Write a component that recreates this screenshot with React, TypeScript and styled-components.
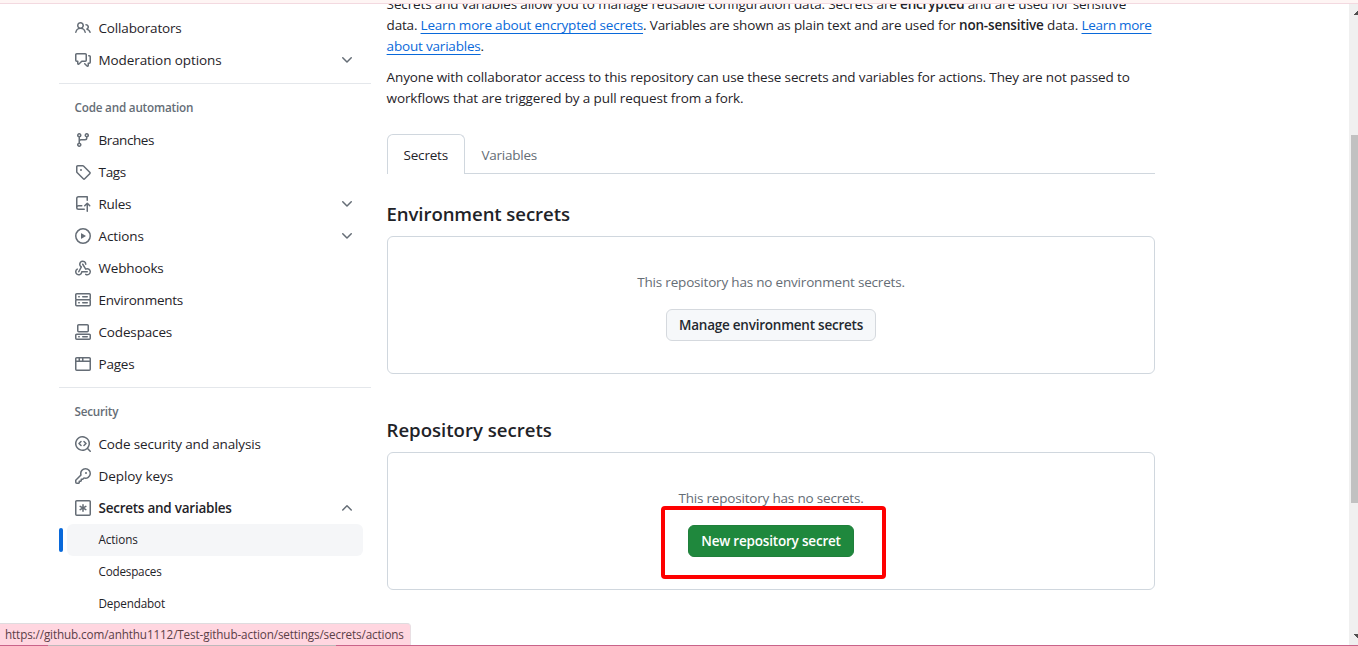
import React from 'react';
import styled, { createGlobalStyle, css } from 'styled-components';

const GlobalStyle = createGlobalStyle`
  *, *::before, *::after { box-sizing: border-box; }
  body {
    margin: 0;
    background: #fff;
    color: #1f2328;
    font-family: 'Open Sans', 'Noto Sans', sans-serif;
    font-size: 13.5px;
    line-height: 21px;
  }
  p, h2, h3, ul { margin: 0; padding: 0; }
`;

const Screen = styled.div`
  position: relative;
  display: flex;
  flex-direction: column;
  width: 1358px;
  height: 646px;
  overflow: hidden;
`;

const TopStrip = styled.div`
  flex: none;
  height: 4px;
  background: #fef5f4;
  border-bottom: 1px solid #f3d9e0;
`;

const Body = styled.div`
  display: flex;
  height: 641px;
  overflow: hidden;
`;

const BottomEdge = styled.div`
  flex: none;
  height: 1px;
  background: linear-gradient(to right, #c9638a 48px, #bdb9bb 48px 336px, #c9638a 336px);
`;

const Tracked = styled.span<{ $track?: number }>`
  letter-spacing: ${(p) => p.$track ?? -0.15}px;
  white-space: pre;
`;

/* Sidebar */

const Sidebar = styled.nav`
  flex: none;
  width: 312px;
  margin-left: 59px;
  padding-top: 8px;
`;

const NavGroup = styled.ul`
  list-style: none;
`;

const NavItem = styled.li`
  display: flex;
  align-items: center;
  height: 32px;
  padding: 0 16px;
`;

const NavLabel = styled(Tracked)<{ $strong?: boolean }>`
  flex: 1;
  margin-left: 7.5px;
  font-weight: ${(p) => (p.$strong ? 600 : 400)};
`;

const Divider = styled.hr`
  height: 1px;
  margin: 7px 0 8px;
  border: 0;
  background: #e4e7eb;
`;

const GroupTitle = styled.h3<{ $track: number }>`
  height: 32px;
  padding-left: 15.5px;
  font-size: 11.7px;
  font-weight: 600;
  line-height: 30px;
  letter-spacing: ${(p) => p.$track}px;
  color: #656d76;
`;

const SubItem = styled.li<{ $current?: boolean }>`
  position: relative;
  height: 32px;
  margin: 0 8px;
  padding-left: 31.5px;
  border-radius: 6px;
  font-size: 11.7px;
  line-height: 30px;
  ${(p) =>
    p.$current &&
    css`
      background: #f5f6f8;
      &::before {
        content: '';
        position: absolute;
        top: 4px;
        left: -8px;
        width: 4px;
        height: 24px;
        border-radius: 2px;
        background: #0969da;
      }
    `}
`;

const Glyph = styled.svg`
  flex: none;
  width: 16px;
  height: 16px;
  fill: #656d76;
`;

const paths = {
  people:
    'M2 5.5a3.5 3.5 0 1 1 5.898 2.549 5.508 5.508 0 0 1 3.034 4.084.75.75 0 1 1-1.482.235 4 4 0 0 0-7.9 0 .75.75 0 0 1-1.482-.236A5.507 5.507 0 0 1 3.102 8.05 3.493 3.493 0 0 1 2 5.5ZM11 4a3.001 3.001 0 0 1 2.22 5.018 5.01 5.01 0 0 1 2.56 3.012.749.749 0 0 1-.885.954.752.752 0 0 1-.549-.514 3.507 3.507 0 0 0-2.522-2.372.75.75 0 0 1-.574-.73v-.352a.75.75 0 0 1 .416-.672A1.5 1.5 0 0 0 11 5.5.75.75 0 0 1 11 4Zm-5.5-.5a2 2 0 1 0-.001 3.999A2 2 0 0 0 5.5 3.5Z',
  discussion:
    'M1.75 1h8.5c.966 0 1.75.784 1.75 1.75v5.5A1.75 1.75 0 0 1 10.25 10H7.061l-2.574 2.573A1.458 1.458 0 0 1 2 11.543V10h-.25A1.75 1.75 0 0 1 0 8.25v-5.5C0 1.784.784 1 1.75 1ZM1.5 2.75v5.5c0 .138.112.25.25.25h1a.75.75 0 0 1 .75.75v2.19l2.72-2.72a.749.749 0 0 1 .53-.22h3.5a.25.25 0 0 0 .25-.25v-5.5a.25.25 0 0 0-.25-.25h-8.5a.25.25 0 0 0-.25.25Zm13 2a.25.25 0 0 0-.25-.25h-.5a.75.75 0 0 1 0-1.5h.5c.966 0 1.75.784 1.75 1.75v5.5A1.75 1.75 0 0 1 14.25 12H14v1.543a1.458 1.458 0 0 1-2.487 1.03L9.22 12.28a.749.749 0 0 1 .326-1.275.749.749 0 0 1 .734.215l2.22 2.22v-2.19a.75.75 0 0 1 .75-.75h1a.25.25 0 0 0 .25-.25Z',
  branch:
    'M9.5 3.25a2.25 2.25 0 1 1 3 2.122V6A2.5 2.5 0 0 1 10 8.5H6a1 1 0 0 0-1 1v1.128a2.251 2.251 0 1 1-1.5 0V5.372a2.25 2.25 0 1 1 1.5 0v1.836A2.493 2.493 0 0 1 6 7h4a1 1 0 0 0 1-1v-.628A2.25 2.25 0 0 1 9.5 3.25Zm-6 0a.75.75 0 1 0 1.5 0 .75.75 0 0 0-1.5 0Zm8.25-.75a.75.75 0 1 0 0 1.5.75.75 0 0 0 0-1.5ZM4.25 12a.75.75 0 1 0 0 1.5.75.75 0 0 0 0-1.5Z',
  tag: 'M1 7.775V2.75C1 1.784 1.784 1 2.75 1h5.025c.464 0 .91.184 1.238.513l6.25 6.25a1.75 1.75 0 0 1 0 2.474l-5.026 5.026a1.75 1.75 0 0 1-2.474 0l-6.25-6.25A1.752 1.752 0 0 1 1 7.775Zm1.5 0c0 .066.026.13.073.177l6.25 6.25a.25.25 0 0 0 .354 0l5.025-5.025a.25.25 0 0 0 0-.354l-6.25-6.25a.25.25 0 0 0-.177-.073H2.75a.25.25 0 0 0-.25.25ZM6 5a1 1 0 1 1 0 2 1 1 0 0 1 0-2Z',
  push: 'M1 2.5A2.5 2.5 0 0 1 3.5 0h8.75a.75.75 0 0 1 .75.75v3.5a.75.75 0 0 1-1.5 0V1.5h-8a1 1 0 0 0-1 1v6.708A2.493 2.493 0 0 1 3.5 9h3.25a.75.75 0 0 1 0 1.5H3.5a1 1 0 0 0 0 2h5.75a.75.75 0 0 1 0 1.5H3.5A2.5 2.5 0 0 1 1 11.5Zm13.23 7.79h-.001l-1.224-1.224v6.184a.75.75 0 0 1-1.5 0V9.066L10.28 10.29a.75.75 0 0 1-1.06-1.061l2.505-2.504a.75.75 0 0 1 1.06 0L15.29 9.23a.751.751 0 0 1-.018 1.042.751.751 0 0 1-1.042.018Z',
  play: 'M8 0a8 8 0 1 1 0 16A8 8 0 0 1 8 0ZM1.5 8a6.5 6.5 0 1 0 13 0 6.5 6.5 0 0 0-13 0Zm4.879-2.773 4.264 2.559a.25.25 0 0 1 0 .428l-4.264 2.559A.25.25 0 0 1 6 10.559V5.442a.25.25 0 0 1 .379-.215Z',
  webhook:
    'M5.5 4.25a2.25 2.25 0 0 1 4.5 0 .75.75 0 0 0 1.5 0 3.75 3.75 0 1 0-6.14 2.889l-2.272 4.258a.75.75 0 0 0 1.324.706L7 7.25a.75.75 0 0 0-.309-1.015A2.25 2.25 0 0 1 5.5 4.25ZM7.364 3.607a.75.75 0 0 1 1.03.257l2.608 4.349a3.75 3.75 0 1 1-.628 6.785.75.75 0 0 1 .752-1.299 2.25 2.25 0 1 0-.033-3.88.75.75 0 0 1-1.03-.256L7.107 4.636a.75.75 0 0 1 .257-1.03ZM2.9 8.776A.75.75 0 0 1 2.625 9.8 2.25 2.25 0 1 0 6 11.75a.75.75 0 0 1 .75-.751h5.5a.75.75 0 0 1 0 1.5H7.425a3.751 3.751 0 1 1-5.55-3.998.75.75 0 0 1 1.024.274Z',
  server:
    'M1.75 1h12.5c.966 0 1.75.784 1.75 1.75v4c0 .372-.116.717-.314 1 .198.283.314.628.314 1v4a1.75 1.75 0 0 1-1.75 1.75H1.75A1.75 1.75 0 0 1 0 12.75v-4c0-.358.109-.707.314-1a1.739 1.739 0 0 1-.314-1v-4C0 1.784.784 1 1.75 1ZM1.5 2.75v4c0 .138.112.25.25.25h12.5a.25.25 0 0 0 .25-.25v-4a.25.25 0 0 0-.25-.25H1.75a.25.25 0 0 0-.25.25Zm.25 5.75a.25.25 0 0 0-.25.25v4c0 .138.112.25.25.25h12.5a.25.25 0 0 0 .25-.25v-4a.25.25 0 0 0-.25-.25ZM7 4.75A.75.75 0 0 1 7.75 4h4.5a.75.75 0 0 1 0 1.5h-4.5A.75.75 0 0 1 7 4.75ZM7.75 10h4.5a.75.75 0 0 1 0 1.5h-4.5a.75.75 0 0 1 0-1.5ZM3 4.75A.75.75 0 0 1 3.75 4h.5a.75.75 0 0 1 0 1.5h-.5A.75.75 0 0 1 3 4.75ZM3.75 10h.5a.75.75 0 0 1 0 1.5h-.5a.75.75 0 0 1 0-1.5Z',
  codespaces:
    'M0 11.25c0-.966.784-1.75 1.75-1.75h12.5c.966 0 1.75.784 1.75 1.75v3A1.75 1.75 0 0 1 14.25 16H1.75A1.75 1.75 0 0 1 0 14.25Zm2-9.5C2 .784 2.784 0 3.75 0h8.5C13.216 0 14 .784 14 1.75v5a1.75 1.75 0 0 1-1.75 1.75h-8.5A1.75 1.75 0 0 1 2 6.75Zm1.75-.25a.25.25 0 0 0-.25.25v5c0 .138.112.25.25.25h8.5a.25.25 0 0 0 .25-.25v-5a.25.25 0 0 0-.25-.25Zm-2 9.5a.25.25 0 0 0-.25.25v3c0 .138.112.25.25.25h12.5a.25.25 0 0 0 .25-.25v-3a.25.25 0 0 0-.25-.25ZM7 12.75a.75.75 0 0 1 .75-.75h4.5a.75.75 0 0 1 0 1.5h-4.5a.75.75 0 0 1-.75-.75Zm-4 0a.75.75 0 0 1 .75-.75h.5a.75.75 0 0 1 0 1.5h-.5a.75.75 0 0 1-.75-.75Z',
  browser:
    'M0 2.75C0 1.784.784 1 1.75 1h12.5c.966 0 1.75.784 1.75 1.75v10.5A1.75 1.75 0 0 1 14.25 15H1.75A1.75 1.75 0 0 1 0 13.25ZM14.5 6h-13v7.25c0 .138.112.25.25.25h12.5a.25.25 0 0 0 .25-.25Zm-6-3.5v2h6V2.75a.25.25 0 0 0-.25-.25ZM5 2.5v2h2v-2Zm-3.25 0a.25.25 0 0 0-.25.25V4.5h2v-2Z',
  codescan:
    'M8.47 4.97a.75.75 0 0 0 0 1.06L9.94 7.5 8.47 8.97a.75.75 0 1 0 1.06 1.06l2-2a.75.75 0 0 0 0-1.06l-2-2a.75.75 0 0 0-1.06 0ZM6.53 6.03a.75.75 0 0 0-1.06-1.06l-2 2a.75.75 0 0 0 0 1.06l2 2a.75.75 0 1 0 1.06-1.06L5.06 7.5l1.47-1.47ZM12.246 13.307a7.501 7.501 0 1 1 1.06-1.06l2.474 2.473a.749.749 0 0 1-.326 1.275.749.749 0 0 1-.734-.215ZM1.5 7.5a6.002 6.002 0 0 0 3.608 5.504 6.002 6.002 0 0 0 6.486-1.117.748.748 0 0 1 .292-.293A6 6 0 1 0 1.5 7.5Z',
  key: 'M10.5 0a5.499 5.499 0 1 1-1.288 10.848l-.932.932a.749.749 0 0 1-.53.22H7v.75a.749.749 0 0 1-.22.53l-.5.5a.749.749 0 0 1-.53.22H5v.75a.749.749 0 0 1-.22.53l-.5.5a.749.749 0 0 1-.53.22h-2A1.75 1.75 0 0 1 0 14.25v-2c0-.199.079-.389.22-.53l4.932-4.932A5.5 5.5 0 0 1 10.5 0Zm-4 5.5c-.001.431.069.86.205 1.269a.75.75 0 0 1-.181.768L1.5 12.56v1.69c0 .138.112.25.25.25h1.69l.06-.06v-1.19a.75.75 0 0 1 .75-.75h1.19l.06-.06v-1.19a.75.75 0 0 1 .75-.75h1.19l1.023-1.025a.75.75 0 0 1 .768-.18A4 4 0 1 0 6.5 5.5ZM11 6a1 1 0 1 1 0-2 1 1 0 0 1 0 2Z',
  secret:
    'M1.75 0h12.5C15.216 0 16 .784 16 1.75v12.5A1.75 1.75 0 0 1 14.25 16H1.75A1.75 1.75 0 0 1 0 14.25V1.75C0 .784.784 0 1.75 0ZM1.5 1.75v12.5c0 .138.112.25.25.25h12.5a.25.25 0 0 0 .25-.25V1.75a.25.25 0 0 0-.25-.25H1.75a.25.25 0 0 0-.25.25ZM8 4a.75.75 0 0 1 .75.75V6.7l1.69-.975a.75.75 0 0 1 .75 1.3L9.5 8l1.69.976a.75.75 0 0 1-.75 1.298L8.75 9.3v1.951a.75.75 0 0 1-1.5 0V9.299l-1.69.976a.75.75 0 0 1-.75-1.3L6.5 8l-1.69-.975a.75.75 0 0 1 .75-1.3l1.69.976V4.75A.75.75 0 0 1 8 4Z',
  down: 'M12.78 5.22a.749.749 0 0 1 0 1.06l-4.25 4.25a.749.749 0 0 1-1.06 0L3.22 6.28a.749.749 0 1 1 1.06-1.06L8 8.939l3.72-3.719a.749.749 0 0 1 1.06 0Z',
  up: 'M3.22 10.53a.749.749 0 0 1 0-1.06l4.25-4.25a.749.749 0 0 1 1.06 0l4.25 4.25a.749.749 0 1 1-1.06 1.06L8 6.811 4.28 10.53a.749.749 0 0 1-1.06 0Z',
};

type IconName = keyof typeof paths;

const Icon = ({ name }: { name: IconName }) => (
  <Glyph viewBox="0 0 16 16" aria-hidden>
    <path d={paths[name]} />
  </Glyph>
);

type Entry = { icon: IconName; label: string; track: number; chevron?: 'down' | 'up'; strong?: boolean };

const access: Entry[] = [
  { icon: 'people', label: 'Collaborators', track: -0.16 },
  { icon: 'discussion', label: 'Moderation options', track: -0.09, chevron: 'down' },
];

const automation: Entry[] = [
  { icon: 'branch', label: 'Branches', track: -0.4 },
  { icon: 'tag', label: 'Tags', track: -0.3 },
  { icon: 'push', label: 'Rules', track: -0.25, chevron: 'down' },
  { icon: 'play', label: 'Actions', track: -0.1, chevron: 'down' },
  { icon: 'webhook', label: 'Webhooks', track: -0.15 },
  { icon: 'server', label: 'Environments', track: -0.246 },
  { icon: 'codespaces', label: 'Codespaces', track: -0.15 },
  { icon: 'browser', label: 'Pages', track: -0.2 },
];

const security: Entry[] = [
  { icon: 'codescan', label: 'Code security and analysis', track: -0.145 },
  { icon: 'key', label: 'Deploy keys', track: -0.06 },
  { icon: 'secret', label: 'Secrets and variables', track: -0.249, chevron: 'up', strong: true },
];

const NavEntries = ({ items }: { items: Entry[] }) => (
  <>
    {items.map((item) => (
      <NavItem key={item.label}>
        <Icon name={item.icon} />
        <NavLabel $track={item.track} $strong={item.strong}>
          {item.label}
        </NavLabel>
        {item.chevron && <Icon name={item.chevron} />}
      </NavItem>
    ))}
  </>
);

/* Main column */

const Main = styled.main`
  flex: none;
  width: 768px;
  margin-left: 16px;
`;

const Paragraph = styled.p<{ $pull?: boolean }>`
  margin-top: ${(p) => (p.$pull ? '-10px' : '10px')};
  margin-left: -0.4px;
  white-space: nowrap;
`;

const Line = styled.span`
  display: block;
  height: 21px;
`;

const Strong = styled(Tracked)`
  font-weight: 600;
`;

const Link = styled(Tracked)`
  color: #0969da;
  text-decoration: underline;
  text-decoration-thickness: 1px;
  text-decoration-skip-ink: none;
  text-underline-offset: 3px;
`;

const Tabs = styled.div`
  display: flex;
  height: 40px;
  margin-top: 25px;
  border-bottom: 1px solid #d0d7de;
`;

const Tab = styled.div<{ $active?: boolean }>`
  height: 40px;
  padding: 10px 16px 0 15.5px;
  border: 1px solid transparent;
  border-bottom: 0;
  color: #656d76;
  ${(p) =>
    p.$active &&
    css`
      width: 78px;
      border-color: #d0d7de;
      border-radius: 6px 6px 0 0;
      background: #fff;
      color: #1f2328;
    `}
`;

const Heading = styled.h2<{ $track: number; $gap: number }>`
  margin-top: ${(p) => p.$gap}px;
  margin-left: -0.5px;
  font-size: 18.6px;
  font-weight: 600;
  line-height: 30px;
  letter-spacing: ${(p) => p.$track}px;
`;

const Blankslate = styled.section`
  display: flex;
  flex-direction: column;
  align-items: center;
  height: 138px;
  margin-top: 7px;
  padding-top: 35px;
  border: 1px solid #d0d7de;
  border-radius: 6px;
`;

const Note = styled.p<{ $track: number }>`
  color: #656d76;
  letter-spacing: ${(p) => p.$track}px;
`;

const Button = styled.button<{ $primary?: boolean; $track: number; $width: number }>`
  width: ${(p) => p.$width}px;
  height: 32px;
  margin-top: 16px;
  padding: 0;
  border: 1px solid ${(p) => (p.$primary ? '#1f7f3b' : '#d5d9de')};
  border-radius: 6px;
  background: ${(p) => (p.$primary ? '#1f883d' : '#f6f8fa')};
  color: ${(p) => (p.$primary ? '#fff' : '#24292f')};
  font: 600 13.5px/20px 'Open Sans', 'Noto Sans', sans-serif;
  letter-spacing: ${(p) => p.$track}px;
  white-space: nowrap;
`;

/* Browser chrome */

const Scrollbar = styled.div`
  display: flex;
  flex-direction: column;
  width: 9px;
  margin-left: auto;
  padding: 7px 0 7px 2px;
  background: #f0f0f0;
`;

const Thumb = styled.div`
  height: 368px;
  margin: 120px 0 auto;
  background: #c1c1c1;
`;

const Arrow = styled.svg`
  flex: none;
  align-self: flex-end;
  width: 4px;
  height: 4px;
  fill: #505050;
`;

const StatusBubble = styled.div`
  position: absolute;
  left: 0;
  bottom: 1px;
  width: 411px;
  height: 22px;
  padding-left: 5px;
  border-top: 1px solid #dfdcdf;
  border-right: 1px solid #e9dfe3;
  border-top-right-radius: 4px;
  background: #ffd6e0;
  color: #5b4047;
  font-size: 11.7px;
  line-height: 20px;
`;

const Highlight = styled.div`
  position: absolute;
  left: 661px;
  top: 506px;
  width: 225px;
  height: 73px;
  border: 4px solid #fe0000;
  border-radius: 4px;
`;

export default function App() {
  return (
    <>
      <GlobalStyle />
      <Screen>
        <TopStrip />
        <Body>
          <Sidebar>
            <NavGroup>
              <NavEntries items={access} />
            </NavGroup>
            <Divider />
            <GroupTitle $track={-0.2}>Code and automation</GroupTitle>
            <NavGroup>
              <NavEntries items={automation} />
            </NavGroup>
            <Divider />
            <GroupTitle $track={-0.22}>Security</GroupTitle>
            <NavGroup>
              <NavEntries items={security} />
              <SubItem $current>
                <Tracked $track={-0.1}>Actions</Tracked>
              </SubItem>
              <SubItem>
                <Tracked $track={-0.205}>Codespaces</Tracked>
              </SubItem>
              <SubItem>
                <Tracked $track={-0.142}>Dependabot</Tracked>
              </SubItem>
            </NavGroup>
          </Sidebar>

          <Main>
            <Paragraph $pull>
              <Line>
                <Tracked $track={-0.134}>
                  {'Secrets and variables allow you to manage reusable configuration data. Secrets are '}
                </Tracked>
                <Strong $track={-0.2}>encrypted</Strong>
                <Tracked $track={-0.14}>{' and are used for sensitive'}</Tracked>
              </Line>
              <Line>
                <Tracked $track={-0.2}>{'data. '}</Tracked>
                <Link $track={-0.191}>Learn more about encrypted secrets</Link>
                <Tracked $track={-0.158}>{'. Variables are shown as plain text and are used for '}</Tracked>
                <Strong $track={-0.199}>non-sensitive</Strong>
                <Tracked $track={-0.1}>{' data. '}</Tracked>
                <Link $track={-0.315}>Learn more</Link>
              </Line>
              <Line>
                <Link $track={-0.189}>about variables</Link>.
              </Line>
            </Paragraph>
            <Paragraph>
              <Line>
                <Tracked $track={-0.136}>
                  Anyone with collaborator access to this repository can use these secrets and variables for actions. They are not passed to
                </Tracked>
              </Line>
              <Line>
                <Tracked $track={-0.12}>workflows that are triggered by a pull request from a fork.</Tracked>
              </Line>
            </Paragraph>

            <Tabs>
              <Tab $active>
                <Tracked $track={-0.185}>Secrets</Tracked>
              </Tab>
              <Tab>
                <Tracked $track={-0.24}>Variables</Tracked>
              </Tab>
            </Tabs>

            <Heading $track={-0.09} $gap={25}>
              Environment secrets
            </Heading>
            <Blankslate>
              <Note $track={-0.191}>This repository has no environment secrets.</Note>
              <Button $track={-0.233} $width={210}>
                Manage environment secrets
              </Button>
            </Blankslate>

            <Heading $track={0} $gap={41}>
              Repository secrets
            </Heading>
            <Blankslate>
              <Note $track={-0.191}>This repository has no secrets.</Note>
              <Button $primary $track={-0.195} $width={166}>
                New repository secret
              </Button>
            </Blankslate>
          </Main>

          <Scrollbar>
            <Arrow viewBox="0 0 4 4">
              <path d="M0 4V3h1V2h1V1h1V0h1v4Z" />
            </Arrow>
            <Thumb />
            <Arrow viewBox="0 0 4 4">
              <path d="M0 0V1h1V2h1V3h1V4h1V0Z" />
            </Arrow>
          </Scrollbar>
        </Body>
        <BottomEdge />
        <Highlight />
        <StatusBubble>
          <Tracked $track={-0.122}>https://github.com/anhthu1112/Test-github-action/settings/secrets/actions</Tracked>
        </StatusBubble>
      </Screen>
    </>
  );
}
